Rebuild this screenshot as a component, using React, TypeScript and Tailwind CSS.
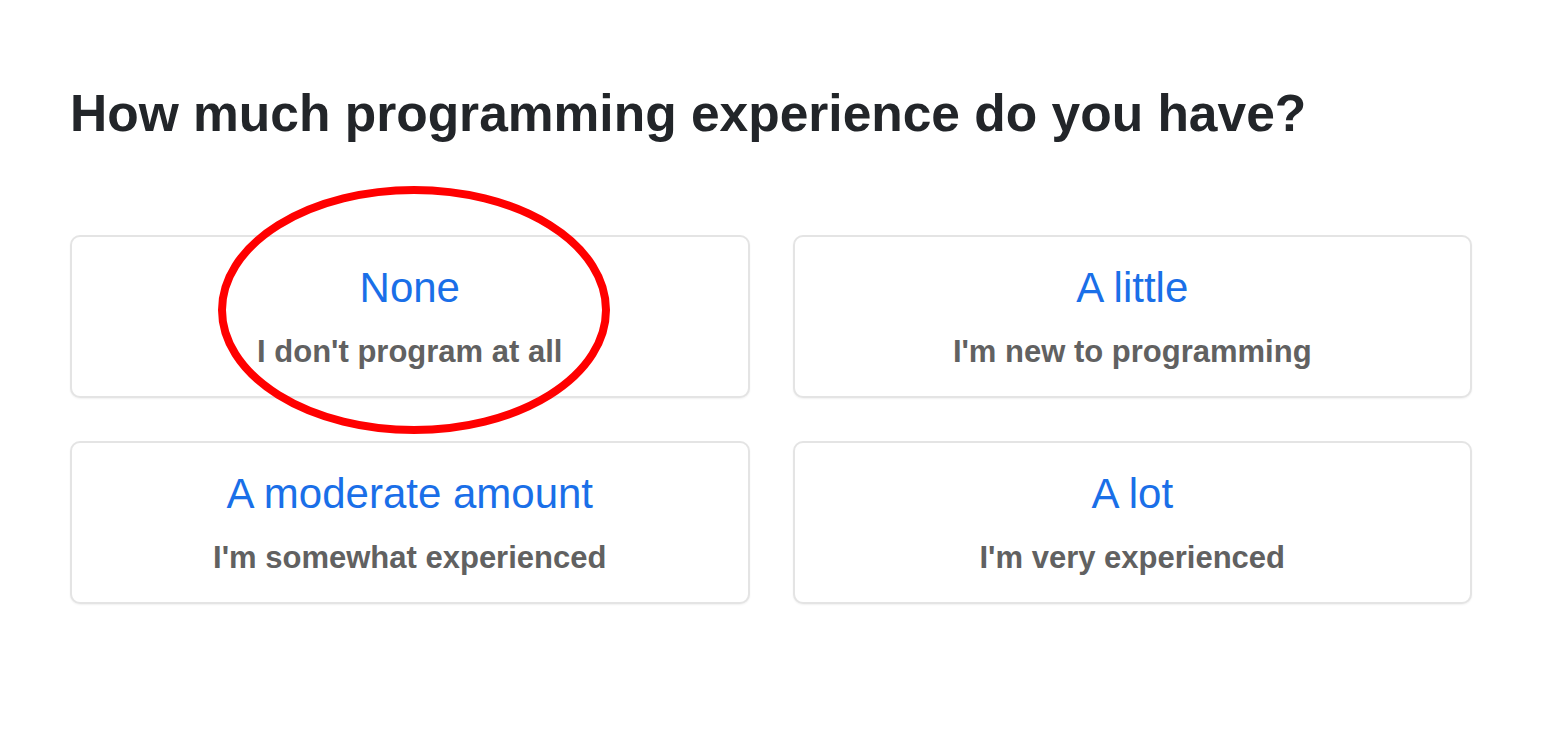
import React from 'react'

const options = [
  { title: 'None', sub: "I don't program at all" },
  { title: 'A little', sub: "I'm new to programming" },
  { title: 'A moderate amount', sub: "I'm somewhat experienced" },
  { title: 'A lot', sub: "I'm very experienced" },
]

export default function App() {
  return (
    <div className="relative h-[736px] w-[1565px] bg-white" style={{ fontFamily: '"Liberation Sans", Arial, sans-serif' }}>
      <div className="px-[70px] pt-[82px]">
        <h1 className="text-[51.5px] font-bold leading-[62px] text-[#222529]">How much programming experience do you have?</h1>
        <div className="mt-[91px] grid w-[1402px] grid-cols-2 gap-x-[43px] gap-y-[43px]">
          {options.map(o => (
            <div
              key={o.title}
              className="flex h-[163px] flex-col items-center justify-center rounded-[10px] border-2 border-[#e4e4e4] bg-white shadow-[0_1px_2px_rgba(0,0,0,0.06)]"
            >
              <div className="text-[42px] leading-[48px] text-[#1a6fe8]">{o.title}</div>
              <div className="mt-[22px] text-[31px] font-bold leading-[36px] text-[#616161]">{o.sub}</div>
            </div>
          ))}
        </div>
      </div>
      <svg className="pointer-events-none absolute left-0 top-0" width="1565" height="736">
        <ellipse cx="414" cy="310" rx="192" ry="120" fill="none" stroke="#ff0000" strokeWidth="8" />
      </svg>
    </div>
  )
}
